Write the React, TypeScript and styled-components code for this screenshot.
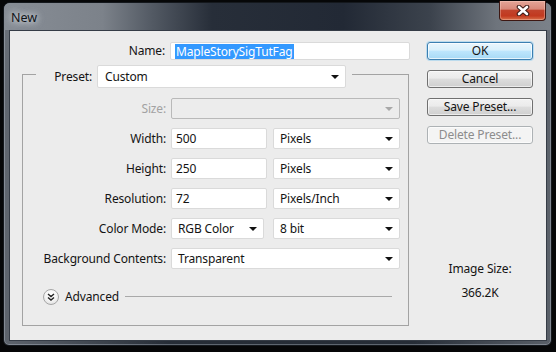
import React from 'react';
import styled, { createGlobalStyle } from 'styled-components';

/* Photoshop "New" document dialog on a Windows 7 Aero frame. */

const FONT = `'Noto Sans', 'DejaVu Sans', sans-serif`;

const GlobalStyle = createGlobalStyle`
  html, body { margin: 0; padding: 0; background: #060708; }
  body { width: 556px; height: 352px; overflow: hidden; font-family: ${FONT}; }
`;

const Window = styled.div`
  box-sizing: border-box;
  margin: 2px 4px 0 3px;
  height: 344px;
  display: flex;
  flex-direction: column;
  border: 1px solid #14181d;
  border-radius: 7px 7px 6px 6px;
  background:
    linear-gradient(90deg, rgba(140,146,154,0.55) 0%, rgba(0,0,0,0) 30%, rgba(0,0,0,0) 75%, rgba(140,146,154,0.5) 100%),
    linear-gradient(180deg, #4a5059 0px, #2e353f 90px, #262d37 100%);
  box-shadow: inset 0 0 0 1px rgba(200, 210, 220, 0.35);
`;

const TitleBar = styled.div`
  height: 27px;
  flex: 0 0 auto;
  display: flex;
  justify-content: space-between;
  align-items: flex-start;
  border-radius: 6px 6px 0 0;
  background: linear-gradient(90deg, #878d95 0%, #7c828a 18%, #535a64 27%, #272e39 38%, #222935 62%, #3c434d 78%, #6e747c 90%, #7b8189 100%);
`;

const Title = styled.span`
  margin: 7px 0 0 7px;
  font-size: 12.5px;
  line-height: 16px;
  color: #101418;
  text-shadow: 0 0 6px rgba(235, 240, 245, 0.95), 0 0 10px rgba(235, 240, 245, 0.7);
`;

const CloseButton = styled.div`
  box-sizing: border-box;
  width: 47px;
  height: 20px;
  margin: -2px 5px 0 0;
  display: flex;
  align-items: center;
  justify-content: center;
  border: 1px solid #3d1712;
  border-top: none;
  border-radius: 0 0 4px 4px;
  background: linear-gradient(180deg, #e4a597 0%, #d8897a 42%, #c1432c 50%, #c2391f 78%, #d9704a 100%);
  box-shadow: inset 0 0 0 1px rgba(255, 220, 210, 0.35);
`;

const Client = styled.div`
  flex: 1;
  margin: 0 4px 4px 5px;
  display: flex;
  border: 1px solid #353c46;
  background: #ececec;
  font-size: 12px;
  letter-spacing: -0.15px;
  color: #141414;
`;

const LeftColumn = styled.div`
  padding: 11px 0 0 12px;
  width: 388px;
  display: flex;
  flex-direction: column;
`;

const RightColumn = styled.div`
  margin-left: 17px;
  padding-top: 11px;
  width: 106px;
  display: flex;
  flex-direction: column;
  gap: 10px;
`;

const Row = styled.div`
  display: grid;
  grid-template-columns: 143px 96px 128px;
  column-gap: 5px;
  align-items: center;
  & > :nth-child(3) { margin-left: 1px; }
`;

const Label = styled.span<{ $disabled?: boolean }>`
  text-align: right;
  white-space: nowrap;
  line-height: 16px;
  color: ${p => (p.$disabled ? '#a2a2a2' : '#141414')};
`;

const TextBox = styled.div<{ $h?: number; $span?: number; $disabled?: boolean }>`
  box-sizing: border-box;
  height: ${p => p.$h ?? 21}px;
  grid-column: span ${p => p.$span ?? 1};
  display: flex;
  align-items: center;
  padding: 0 4px;
  border: 1px solid ${p => (p.$disabled ? '#b9b9b9' : '#dadada')};
  border-radius: 2px;
  background: ${p => (p.$disabled ? '#ececec' : '#ffffff')};
  white-space: nowrap;
  overflow: hidden;
`;

const Selected = styled.span`
  background: #3399ff;
  color: #ffffff;
  line-height: 15px;
  padding: 0 1px;
`;

const Dropdown = styled.div<{ $w?: number; $span?: number; $disabled?: boolean }>`
  box-sizing: border-box;
  height: 21px;
  width: ${p => (p.$w ? `${p.$w}px` : 'auto')};
  grid-column: span ${p => p.$span ?? 1};
  display: flex;
  align-items: center;
  padding: 0 6px 0 6px;
  border: 1px solid ${p => (p.$disabled ? '#b9b9b9' : '#dadada')};
  border-radius: 2px;
  background: ${p => (p.$disabled ? '#ececec' : '#ffffff')};
  white-space: nowrap;
`;

const DropText = styled.span`
  flex: 1;
  line-height: 16px;
`;

const Arrow = styled.span<{ $disabled?: boolean }>`
  width: 0;
  height: 0;
  border-left: 4px solid transparent;
  border-right: 4px solid transparent;
  border-top: 4px solid ${p => (p.$disabled ? '#a8a8a8' : '#111111')};
  margin-top: 1px;
`;

const Group = styled.fieldset`
  box-sizing: border-box;
  width: 387px;
  margin: 0;
  padding: 10px 0 21px 0;
  border: 1px solid #a3a3a3;
  display: flex;
  flex-direction: column;
  gap: 9px;
`;

const Legend = styled.legend`
  margin-left: 13px;
  padding: 5px 6px 0 0;
  display: flex;
  align-items: center;
  gap: 5px;
`;

const PresetLabel = styled(Label)`
  width: 56px;
`;

const PresetSelect = styled(Dropdown)`
  height: 23px;
  width: 249px;
  padding-left: 7px;
`;

const AdvancedRow = styled.div`
  margin: 11px 16px 0 20px;
  height: 15px;
  display: flex;
  align-items: center;
`;

const RoundToggle = styled.span`
  box-sizing: border-box;
  width: 16px;
  height: 16px;
  border-radius: 50%;
  border: 1px solid #a6a6a6;
  background: radial-gradient(circle at 50% 35%, #ffffff 0%, #f4f4f4 50%, #d8d8d8 100%);
  display: flex;
  align-items: center;
  justify-content: center;
`;

const AdvancedText = styled.span`
  margin-left: 6px;
  line-height: 16px;
`;

const Rule = styled.span`
  flex: 1;
  height: 1px;
  margin-left: 6px;
  background: #a9a9a9;
`;

const Button = styled.div<{ $variant?: 'default' | 'disabled' }>`
  box-sizing: border-box;
  height: 18px;
  display: flex;
  align-items: center;
  justify-content: center;
  border-radius: 3px;
  line-height: 16px;
  border: 1px solid ${p => (p.$variant === 'default' ? '#3c7fb1' : p.$variant === 'disabled' ? '#adb2b5' : '#707070')};
  color: ${p => (p.$variant === 'disabled' ? '#8d8d8d' : '#141414')};
  background: ${p =>
    p.$variant === 'default'
      ? 'linear-gradient(180deg, #eaf6fd 0%, #d9f0fc 45%, #bee6fd 50%, #a7d9f5 100%)'
      : p.$variant === 'disabled'
      ? '#f4f4f4'
      : 'linear-gradient(180deg, #f2f2f2 0%, #ebebeb 45%, #dddddd 50%, #cfcfcf 100%)'};
  box-shadow: ${p => (p.$variant === 'default' ? '0 0 0 1px rgba(100,190,240,0.35), inset 0 0 0 1px rgba(255,255,255,0.7)' : 'inset 0 0 0 1px rgba(255,255,255,0.6)')};
`;

const Info = styled.div`
  margin-top: 107px;
  display: flex;
  flex-direction: column;
  align-items: center;
  gap: 8px;
  line-height: 16px;
`;

const units = [
  { label: 'Width:', value: '500', unit: 'Pixels' },
  { label: 'Height:', value: '250', unit: 'Pixels' },
  { label: 'Resolution:', value: '72', unit: 'Pixels/Inch' },
];

export default function App() {
  return (
    <>
      <GlobalStyle />
      <Window>
        <TitleBar>
          <Title>New</Title>
          <CloseButton>
            <svg width="14" height="11" viewBox="0 0 14 11">
              <path d="M3 2 L11 9 M11 2 L3 9" stroke="#3a1a16" strokeWidth="4.6" strokeLinecap="round" />
              <path d="M3 2 L11 9 M11 2 L3 9" stroke="#ffffff" strokeWidth="2.6" strokeLinecap="round" />
            </svg>
          </CloseButton>
        </TitleBar>
        <Client>
          <LeftColumn>
            <Row>
              <Label>Name:</Label>
              <TextBox $h={18} style={{ width: 240 }} $span={2}>
                <Selected>MapleStorySigTutFag</Selected>
              </TextBox>
            </Row>
            <Group>
              <Legend>
                <PresetLabel>Preset:</PresetLabel>
                <PresetSelect>
                  <DropText>Custom</DropText>
                  <Arrow />
                </PresetSelect>
              </Legend>
              <Row>
                <Label $disabled>Size:</Label>
                <Dropdown $span={2} $disabled>
                  <DropText />
                  <Arrow $disabled />
                </Dropdown>
              </Row>
              {units.map(u => (
                <Row key={u.label}>
                  <Label>{u.label}</Label>
                  <TextBox>{u.value}</TextBox>
                  <Dropdown>
                    <DropText>{u.unit}</DropText>
                    <Arrow />
                  </Dropdown>
                </Row>
              ))}
              <Row>
                <Label>Color Mode:</Label>
                <Dropdown $w={93}>
                  <DropText>RGB Color</DropText>
                  <Arrow />
                </Dropdown>
                <Dropdown>
                  <DropText>8 bit</DropText>
                  <Arrow />
                </Dropdown>
              </Row>
              <Row>
                <Label>Background Contents:</Label>
                <Dropdown $span={2}>
                  <DropText>Transparent</DropText>
                  <Arrow />
                </Dropdown>
              </Row>
              <AdvancedRow>
                <RoundToggle>
                  <svg width="8" height="8" viewBox="0 0 8 8">
                    <path d="M1 1 L4 3.5 L7 1 M1 4.5 L4 7 L7 4.5" stroke="#222" strokeWidth="1.4" fill="none" />
                  </svg>
                </RoundToggle>
                <AdvancedText>Advanced</AdvancedText>
                <Rule />
              </AdvancedRow>
            </Group>
          </LeftColumn>
          <RightColumn>
            <Button $variant="default">OK</Button>
            <Button>Cancel</Button>
            <Button>Save Preset...</Button>
            <Button $variant="disabled">Delete Preset...</Button>
            <Info>
              <span>Image Size:</span>
              <span>366.2K</span>
            </Info>
          </RightColumn>
        </Client>
      </Window>
    </>
  );
}
